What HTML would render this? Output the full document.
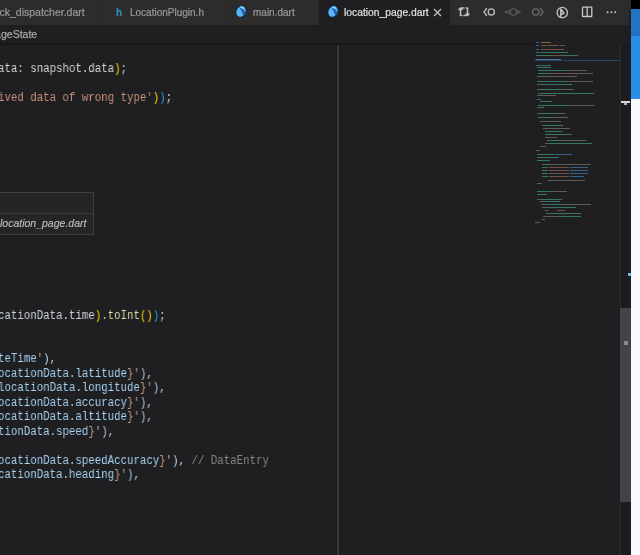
<!DOCTYPE html>
<html><head><meta charset="utf-8">
<style>
*{margin:0;padding:0;box-sizing:border-box}
html,body{width:640px;height:555px;overflow:hidden;background:#1f1e21;position:relative}
body{font-family:"Liberation Sans",sans-serif}
.abs{position:absolute}
#tabs,#crumbs,.code,#tooltip{will-change:transform}
#tabs{left:0;top:0;width:631px;height:25px;background:#2c2c2d}
.tab{position:absolute;top:0;height:25px;color:#9a9a9a;font-size:10px;white-space:nowrap;-webkit-text-stroke:0.2px currentColor}
.tab .t{position:absolute;top:7px}
.sep{position:absolute;top:0;width:1px;height:25px;background:#29292a}
#active{left:319px;width:131px;background:#1f1e21}
#crumbs{left:0;top:25px;width:631px;height:18px;background:#1f1e21;color:#a5a5a5;font-size:10.5px;-webkit-text-stroke:0.25px #a5a5a5}
#shadow{left:0;top:43px;width:534px;height:3px;background:linear-gradient(#141315,#1f1e21)}
#editor{left:0;top:43px;width:631px;height:512px;background:#1f1e21;overflow:hidden}
.code{position:absolute;left:-2.2px;top:1px;font-family:"Liberation Mono",monospace;font-size:12.5px;transform:scaleX(0.86);transform-origin:0 0;white-space:pre;color:#d4d4d4}
.ln{position:absolute;left:0;height:15px;line-height:15px}
.v{color:#a4d2f0}.w{color:#cbd2dc}.s{color:#c8917a}.y{color:#ffd700}.b{color:#179fff}.f{color:#dcdcaa}.c{color:#858585}.o{color:#c99c84}.r{color:#c4a6a0}.q{color:#a9c9e6}.p{color:#d4d4d4}
#mini div{position:absolute;height:1px;opacity:.8}
#mini div.hl{height:1px;opacity:1;-webkit-mask:none}
#right{left:631px;top:0;width:9px;height:555px;background:#f9f8fc}
</style></head><body>
<div id="tabs" class="abs">
  <div class="tab" style="left:0;width:103px"><span class="t" style="left:-0.5px;font-size:10.5px;top:6px">ck_dispatcher.dart</span></div>
  <div class="sep" style="left:103px"></div>
  <div class="tab" style="left:104px;width:120px"><span class="t" style="left:12px;color:#3488b8;font-weight:bold">h</span><span class="t" style="left:26px">LocationPlugin.h</span></div>
  <div class="sep" style="left:224px"></div>
  <div class="tab" style="left:225px;width:95px"><svg class="abs" style="left:10px;top:5px" width="12" height="13" viewBox="0 0 12 13"><g transform="rotate(25 6 6.5)"><ellipse cx="6" cy="6.5" rx="5.3" ry="6.4" fill="#0c2b4d"/><ellipse cx="6" cy="6.5" rx="4.4" ry="5.5" fill="#5cb5f3"/><path d="M2.8 3.4 Q7 2.6 10.4 5.6 L10.2 9.4 Q6 5.6 2.8 3.4 Z" fill="#1e62b4"/><ellipse cx="5.4" cy="2.4" rx="2.2" ry="1" fill="#8fd0fb"/></g></svg><span class="t" style="left:28px">main.dart</span></div>
  <div class="tab" id="active" style="color:#e0e0e0"><svg class="abs" style="left:8px;top:5px" width="12" height="13" viewBox="0 0 12 13"><g transform="rotate(25 6 6.5)"><ellipse cx="6" cy="6.5" rx="5.3" ry="6.4" fill="#0c2b4d"/><ellipse cx="6" cy="6.5" rx="4.4" ry="5.5" fill="#5cb5f3"/><path d="M2.8 3.4 Q7 2.6 10.4 5.6 L10.2 9.4 Q6 5.6 2.8 3.4 Z" fill="#1e62b4"/><ellipse cx="5.4" cy="2.4" rx="2.2" ry="1" fill="#8fd0fb"/></g></svg><span class="t" style="left:25px;font-size:10.3px">location_page.dart</span><svg class="abs" style="left:114px;top:8px" width="9" height="9" viewBox="0 0 9 9"><path d="M1 1 L8 8 M8 1 L1 8" stroke="#c8c8c8" stroke-width="1.2"/></svg></div>
<svg class="abs" style="left:452px;top:0" width="179" height="25" viewBox="452 0 179 25" fill="none" stroke-linecap="round">
 <g stroke="#c2c2c2" stroke-width="1.5">
  <path d="M460.5 8 V15.5 M459 9.5 L460.5 8 L462 9.5 M460.5 15.5 h1.2"/>
  <path d="M467.5 8 V15.5 M466 14 L467.5 15.5 L469 14 M467.5 8 h-1.2"/>
  <path d="M462 8 h2 M466 15.5 h-2"/>
 </g>
 <g stroke="#bdbdbd" stroke-width="1.3">
  <path d="M486.5 8.5 L484 12 L486.5 15.5"/>
  <circle cx="491.3" cy="12" r="3.1"/>
 </g>
 <g stroke="#616161" stroke-width="1.1">
  <path d="M505 12 L510 10.5 M505 12 L510 13.5 M517 10.5 L520 12 L517 13.5"/>
  <circle cx="513.5" cy="12" r="3.2"/>
 </g>
 <g stroke="#6c6c6c" stroke-width="1.3">
  <circle cx="535.8" cy="12" r="3.2"/>
  <path d="M540.5 8.5 L543 12 L540.5 15.5"/>
 </g>
 <g stroke="#c2c2c2" stroke-width="1.3">
  <circle cx="562.3" cy="12.6" r="5.2"/>
  <path d="M560.8 9 V16.5 M561 9.2 L564 13 L561.2 14.5" stroke-width="1.5"/>
 </g>
 <g stroke="#c8c8c8" stroke-width="1.3">
  <rect x="582.5" y="7.2" width="9.3" height="9.3" rx="0.6"/>
  <path d="M587.2 7.5 V16.3"/>
 </g>
 <g fill="#c8c8c8" stroke="none">
  <circle cx="607.6" cy="12.2" r="0.95"/><circle cx="611.4" cy="12.2" r="0.95"/><circle cx="615.2" cy="12.2" r="0.95"/>
 </g>
</svg>
</div>
<div id="crumbs" class="abs"><span class="abs" style="left:-4.9px;top:3px">ageState</span></div>
<div id="editor" class="abs">
  <div class="abs" style="left:336px;top:0;width:1px;height:512px;background:#1b1a1d"></div><div class="abs" style="left:337px;top:0;width:2px;height:512px;background:#38373b"></div>
  <div class="code"><!--CODE-->
<div class="ln" style="top:17.6px"><span class="p">ata: </span><span class="p">snapshot.data</span><span class="y">)</span><span class="p">;</span></div>
<div class="ln" style="top:46.7px"><span class="s">ived data of wrong type'</span><span class="y">)</span><span class="b">)</span><span class="p">;</span></div>
<div class="ln" style="top:264.6px"><span class="w">cationData.time</span><span class="y">)</span><span class="f">.toInt</span><span class="y">()</span><span class="b">)</span><span class="p">;</span></div>
<div class="ln" style="top:308.2px"><span class="v">teTime</span><span class="r">'</span><span class="q">)</span><span class="p">,</span></div>
<div class="ln" style="top:322.7px"><span class="v">ocationData.latitude</span><span class="o">}</span><span class="r">'</span><span class="q">)</span><span class="p">,</span></div>
<div class="ln" style="top:337.3px"><span class="v">locationData.longitude</span><span class="o">}</span><span class="r">'</span><span class="q">)</span><span class="p">,</span></div>
<div class="ln" style="top:351.8px"><span class="v">ocationData.accuracy</span><span class="o">}</span><span class="r">'</span><span class="q">)</span><span class="p">,</span></div>
<div class="ln" style="top:366.3px"><span class="v">ocationData.altitude</span><span class="o">}</span><span class="r">'</span><span class="q">)</span><span class="p">,</span></div>
<div class="ln" style="top:380.9px"><span class="v">tionData.speed</span><span class="o">}</span><span class="r">'</span><span class="q">)</span><span class="p">,</span></div>
<div class="ln" style="top:409.9px"><span class="v">ocationData.speedAccuracy</span><span class="o">}</span><span class="r">'</span><span class="q">)</span><span class="p">, </span><span class="c">// DataEntry</span></div>
<div class="ln" style="top:424.4px"><span class="v">cationData.heading</span><span class="o">}</span><span class="r">'</span><span class="q">)</span><span class="p">,</span></div>
<!--/CODE-->
  </div>
</div>

<div id="mini" class="abs" style="left:534px;top:43px;width:86px;height:512px">
<div class="abs hl" style="left:0;top:17px;width:86px;background:#264466"></div>
<!--MINI-->
<div style="left:1.5px;top:-1px;width:3.5px;background:#3d73a8"></div>
<div style="left:6.7px;top:-1px;width:10.7px;background:#9c7a44"></div>
<div style="left:1.5px;top:2px;width:3.5px;background:#3d73a8"></div>
<div style="left:6.7px;top:2px;width:18.8px;background:#8e5c4c"></div>
<div style="left:25.5px;top:2px;width:5.5px;background:#6c6c6c"></div>
<div style="left:1.5px;top:6px;width:3.5px;background:#3d73a8"></div>
<div style="left:6.7px;top:6px;width:23.2px;background:#8e5c4c"></div>
<div style="left:1.5px;top:9px;width:5.2px;background:#3d73a8"></div>
<div style="left:6.7px;top:9px;width:26.9px;background:#3d8c76"></div>
<div style="left:1.5px;top:12px;width:16.5px;background:#3d8c76"></div>
<div style="left:18.0px;top:12px;width:8.0px;background:#8e5c4c"></div>
<div style="left:26.0px;top:12px;width:5.0px;background:#6c6c6c"></div>
<div style="left:31.0px;top:12px;width:13.0px;background:#3d8c76"></div>
<div style="left:1.5px;top:16px;width:25.9px;background:#5a8fb8"></div>
<div style="left:1.5px;top:22px;width:15.2px;background:#3d8c76"></div>
<div style="left:3.0px;top:24px;width:4.0px;background:#3d73a8"></div>
<div style="left:7.0px;top:24px;width:10.0px;background:#3d8c76"></div>
<div style="left:4.0px;top:27px;width:28.0px;background:#3d8c76"></div>
<div style="left:32.0px;top:27px;width:21.0px;background:#6c6c6c"></div>
<div style="left:4.0px;top:30px;width:14.0px;background:#3d8c76"></div>
<div style="left:18.0px;top:30px;width:16.0px;background:#8e5c4c"></div>
<div style="left:34.0px;top:30px;width:25.0px;background:#6c6c6c"></div>
<div style="left:3.0px;top:33px;width:15.0px;background:#6c6c6c"></div>
<div style="left:18.0px;top:33px;width:25.0px;background:#6c6c6c"></div>
<div style="left:3.0px;top:38px;width:29.0px;background:#3d8c76"></div>
<div style="left:32.0px;top:38px;width:27.0px;background:#6c6c6c"></div>
<div style="left:3.0px;top:41px;width:35.0px;background:#3d8c76"></div>
<div style="left:3.0px;top:46px;width:24.0px;background:#3d8c76"></div>
<div style="left:27.0px;top:46px;width:13.0px;background:#6c6c6c"></div>
<div style="left:4.0px;top:50px;width:15.0px;background:#3d8c76"></div>
<div style="left:19.0px;top:50px;width:41.0px;background:#3d8c76"></div>
<div style="left:3.0px;top:52px;width:19.0px;background:#6c6c6c"></div>
<div style="left:3.0px;top:56px;width:4.0px;background:#3d73a8"></div>
<div style="left:5.5px;top:58px;width:12.5px;background:#3d8c76"></div>
<div style="left:4.0px;top:62px;width:30.0px;background:#3d8c76"></div>
<div style="left:34.0px;top:62px;width:26.0px;background:#6c6c6c"></div>
<div style="left:3.0px;top:64px;width:7.0px;background:#6c6c6c"></div>
<div style="left:3.0px;top:70px;width:17.5px;background:#3d8c76"></div>
<div style="left:20.5px;top:70px;width:11.2px;background:#6c6c6c"></div>
<div style="left:4.0px;top:74px;width:13.0px;background:#3d8c76"></div>
<div style="left:17.0px;top:74px;width:17.0px;background:#6c6c6c"></div>
<div style="left:5.5px;top:78px;width:21.5px;background:#6c6c6c"></div>
<div style="left:8.0px;top:82px;width:21.0px;background:#3d8c76"></div>
<div style="left:9.0px;top:85px;width:26.5px;background:#6c6c6c"></div>
<div style="left:10.5px;top:88px;width:17.5px;background:#3d8c76"></div>
<div style="left:10.5px;top:91px;width:27.5px;background:#3d8c76"></div>
<div style="left:10.5px;top:94px;width:12.5px;background:#6c6c6c"></div>
<div style="left:13.0px;top:97px;width:16.0px;background:#3d8c76"></div>
<div style="left:29.0px;top:97px;width:23.0px;background:#6c6c6c"></div>
<div style="left:10.5px;top:100px;width:3.5px;background:#8e5c4c"></div>
<div style="left:14.0px;top:100px;width:44.0px;background:#3d8c76"></div>
<div style="left:5.5px;top:103px;width:6.5px;background:#6c6c6c"></div>
<div style="left:2.0px;top:107px;width:3.5px;background:#6c6c6c"></div>
<div style="left:3.0px;top:111px;width:16.0px;background:#3d8c76"></div>
<div style="left:19.0px;top:111px;width:19.0px;background:#3d73a8"></div>
<div style="left:3.0px;top:114px;width:22.0px;background:#3d8c76"></div>
<div style="left:3.0px;top:117px;width:12.5px;background:#3d8c76"></div>
<div style="left:8.0px;top:121px;width:6.0px;background:#3d8c76"></div>
<div style="left:14.0px;top:121px;width:43.0px;background:#6c6c6c"></div>
<div style="left:8.0px;top:124px;width:6.0px;background:#3d8c76"></div>
<div style="left:15.0px;top:124px;width:20.0px;background:#8e5c4c"></div>
<div style="left:35.5px;top:124px;width:18.5px;background:#3d73a8"></div>
<div style="left:8.0px;top:127px;width:6.0px;background:#3d8c76"></div>
<div style="left:15.0px;top:127px;width:20.0px;background:#8e5c4c"></div>
<div style="left:35.5px;top:127px;width:18.5px;background:#3d73a8"></div>
<div style="left:8.0px;top:130px;width:6.0px;background:#3d8c76"></div>
<div style="left:15.0px;top:130px;width:20.0px;background:#6c6c6c"></div>
<div style="left:35.5px;top:130px;width:18.5px;background:#3d73a8"></div>
<div style="left:8.0px;top:133px;width:6.0px;background:#3d8c76"></div>
<div style="left:15.0px;top:133px;width:20.0px;background:#8e5c4c"></div>
<div style="left:35.5px;top:133px;width:14.5px;background:#3d73a8"></div>
<div style="left:14.0px;top:137px;width:36.5px;background:#6c6c6c"></div>
<div style="left:3.0px;top:140px;width:5.0px;background:#6c6c6c"></div>
<div style="left:3.0px;top:148px;width:14.0px;background:#3d8c76"></div>
<div style="left:17.0px;top:148px;width:16.0px;background:#6c6c6c"></div>
<div style="left:3.0px;top:151px;width:10.0px;background:#3d8c76"></div>
<div style="left:3.0px;top:156px;width:25.0px;background:#3d8c76"></div>
<div style="left:5.5px;top:158px;width:20.0px;background:#3d8c76"></div>
<div style="left:7.0px;top:161px;width:7.0px;background:#6c6c6c"></div>
<div style="left:14.0px;top:161px;width:13.0px;background:#3d8c76"></div>
<div style="left:27.0px;top:161px;width:30.0px;background:#6c6c6c"></div>
<div style="left:8.0px;top:164px;width:7.5px;background:#6c6c6c"></div>
<div style="left:15.5px;top:164px;width:26.5px;background:#3d8c76"></div>
<div style="left:10.5px;top:167px;width:3.5px;background:#6c6c6c"></div>
<div style="left:23.0px;top:167px;width:7.5px;background:#8e5c4c"></div>
<div style="left:11.8px;top:170px;width:5.2px;background:#6c6c6c"></div>
<div style="left:17.0px;top:170px;width:30.0px;background:#3d8c76"></div>
<div style="left:9.0px;top:173px;width:16.5px;background:#6c6c6c"></div>
<div style="left:25.5px;top:173px;width:21.5px;background:#3d8c76"></div>
<div style="left:8.0px;top:176px;width:2.5px;background:#6c6c6c"></div>
<div style="left:0.5px;top:179px;width:5.0px;background:#6c6c6c"></div>
<!--/MINI-->
</div>
<div id="tooltip" class="abs" style="left:-2px;top:192px;width:96px;height:43px;background:#252427;border:1px solid #3f3e41">
  <div class="abs" style="left:0;top:2px;width:88px;height:1px;background:#2b2a2d"></div>
  <div class="abs" style="left:0;top:20px;width:94px;height:1px;background:#38373a"></div>
  <span class="abs" style="left:1px;top:24px;font-size:10.5px;font-style:italic;color:#bdbdbd;white-space:nowrap;-webkit-text-stroke:0.15px #bdbdbd">location_page.dart</span>
</div>
<div id="scroll" class="abs" style="left:620px;top:43px;width:11px;height:512px;background:#1c1b1d">
  <div class="abs" style="left:0;top:0;width:1px;height:512px;background:#2c2b2e"></div>
  <div class="abs" style="left:0;top:265px;width:11px;height:194px;background:#454347"></div>
  <div class="abs" style="left:1px;top:58px;width:9px;height:2px;background:#d8d8d8"></div>
  <div class="abs" style="left:4px;top:60px;width:3px;height:2px;background:#b0b0b0"></div>
  <div class="abs" style="left:4px;top:298px;width:4px;height:4px;background:#8a8a8a"></div>
  <div class="abs" style="left:8px;top:230px;width:3px;height:3px;background:#6fb6f0"></div>
</div>
<div id="shadow" class="abs"></div>
<div class="abs" style="left:629px;top:10px;width:2px;height:15px;background:#221f20"></div>
<div id="right" class="abs">
  <div class="abs" style="left:0;top:0;width:9px;height:9px;background:#000"></div>
  <div class="abs" style="left:0;top:9px;width:9px;height:27px;background:#2174c4"></div>
  <div class="abs" style="left:0;top:36px;width:9px;height:63px;background:#2a8de6"></div>
</div>
</body></html>
